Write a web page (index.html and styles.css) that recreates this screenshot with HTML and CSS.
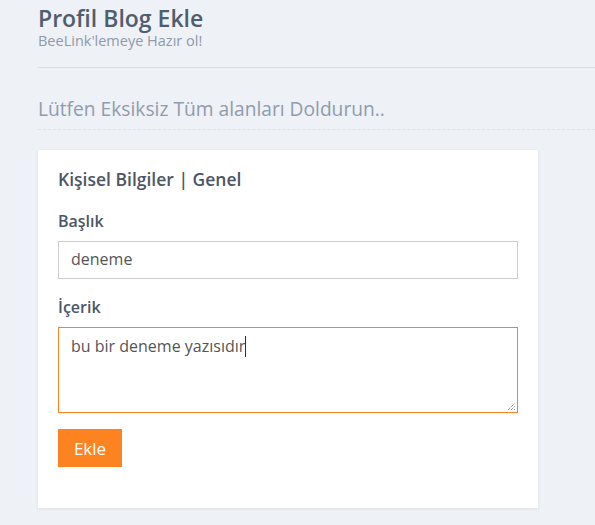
FILE: index.html
```html
<!DOCTYPE html>
<html lang="tr">
<head>
<meta charset="utf-8">
<title>Profil Blog Ekle</title>
<link rel="stylesheet" href="styles.css">
</head>
<body>
<div class="page">
  <div class="page-head">
    <h1 class="page-title">Profil Blog Ekle</h1>
    <div class="page-sub">BeeLink'lemeye Hazır ol!</div>
  </div>
  <h2 class="section-title">Lütfen Eksiksiz Tüm alanları Doldurun..</h2>
  <div class="card">
    <h3 class="card-title">Kişisel Bilgiler | Genel</h3>
    <div class="field">
      <label class="label">Başlık</label>
      <div class="input">deneme</div>
    </div>
    <div class="field">
      <label class="label">İçerik</label>
      <div class="textarea">bu bir deneme yazısıdır<span class="caret"></span>
        <svg class="grip" width="9" height="9" viewBox="0 0 9 9"><path d="M1 8L8 1M4 8L8 4M7 8L8 7" stroke="#666" stroke-width="1" stroke-dasharray="1 1"/></svg>
      </div>
    </div>
    <button class="btn">Ekle</button>
  </div>
</div>
</body>
</html>
```
FILE: styles.css
```css
html, body { margin: 0; padding: 0; }
body {
  background: #eef1f5;
  font-family: "Open Sans", "Noto Sans", sans-serif;
  width: 595px;
  height: 525px;
  overflow: hidden;
}
.page { padding-left: 38px; }
.page-head {
  border-bottom: 1px solid #d9dde2;
  padding-top: 3px;
  padding-bottom: 19px;
}
.page-title {
  margin: 0;
  font-size: 23px;
  font-weight: 600;
  color: #4f5e6e;
  line-height: 31px;
}
.page-sub {
  font-size: 14.5px;
  color: #8e9aa9;
  line-height: 14px;
}
.section-title {
  margin: 0;
  font-size: 19.2px;
  font-weight: 400;
  color: #8f9cae;
  line-height: 26px;
  padding-top: 28px;
  padding-bottom: 7px;
  border-bottom: 1px dashed #dfe3e8;
  margin-bottom: 20px;
}
.card {
  width: 460px;
  background: #fff;
  padding: 17px 20px 41px;
  box-shadow: 0 1px 3px rgba(160, 170, 185, 0.25);
}
.card-title {
  margin: 0 0 19px;
  font-size: 17.5px;
  font-weight: 600;
  color: #4c5664;
  line-height: 24px;
}
.field { margin-bottom: 17px; }
.field:last-of-type { margin-bottom: 16px; }
.label {
  display: block;
  font-size: 16px;
  font-weight: 600;
  color: #4c5664;
  line-height: 22px;
  margin-bottom: 9px;
}
.input {
  box-sizing: border-box;
  height: 38px;
  border: 1px solid #cccccc;
  padding: 0 12px;
  font-size: 16px;
  line-height: 34px;
  color: #555;
}
.textarea {
  position: relative;
  box-sizing: border-box;
  height: 86px;
  border: 1px solid #fd8121;
  padding: 6px 12px;
  font-size: 16px;
  line-height: 24px;
  color: #555;
}
.caret {
  display: inline-block;
  width: 1px;
  height: 21px;
  background: #333;
  vertical-align: -5px;
}
.grip { position: absolute; right: 1px; bottom: 1px; }
.btn {
  display: block;
  border: 0;
  background: #fd8321;
  color: #fff;
  font-family: inherit;
  font-size: 17px;
  width: 64px;
  height: 38px;
  padding: 0;
}
```
